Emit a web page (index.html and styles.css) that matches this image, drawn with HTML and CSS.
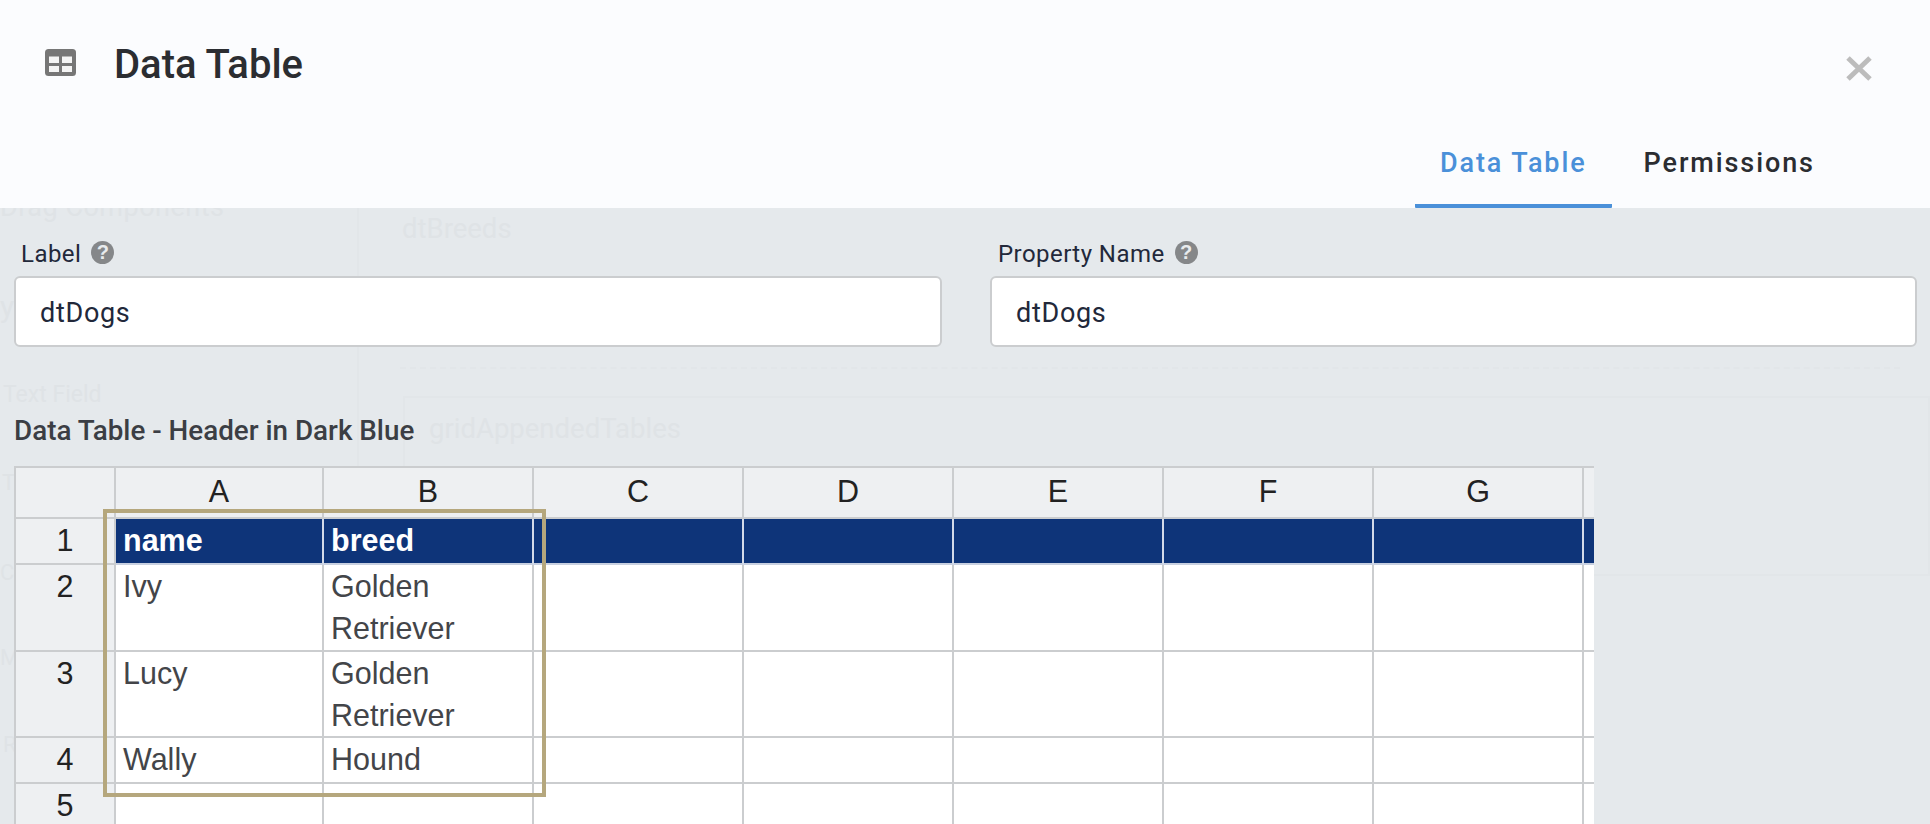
FILE: index.html
```html
<!DOCTYPE html>
<html lang="en">
<head>
<meta charset="utf-8">
<title>Data Table</title>
<link rel="stylesheet" href="styles.css">
</head>
<body>
<div class="backdrop" aria-hidden="true">
  <span class="ghost g-comp">Drag Components</span>
  <span class="ghost g-breeds">dtBreeds</span>
  <span class="ghost g-y">y</span>
  <span class="ghost g-text">Text Field</span>
  <span class="ghost g-grid">gridAppendedTables</span>
  <span class="ghost g-t">T</span>
  <span class="ghost g-c">C</span>
  <span class="ghost g-m">M</span>
  <span class="ghost g-r">R</span>
  <i class="ghost-line gl-v"></i>
  <i class="ghost-line gl-box"></i>
  <i class="ghost-line gl-dash"></i>
</div>
<main class="modal">
  <header class="modal-head">
    <div class="title-row">
      <svg class="title-icon" viewBox="0 0 31 27" aria-hidden="true">
        <rect width="31" height="27" rx="3.5" fill="#767676"/>
        <rect x="4" y="7.5" width="10" height="6.5" fill="#f4f4f4"/>
        <rect x="17" y="7.5" width="10" height="6.5" fill="#f4f4f4"/>
        <rect x="4" y="17" width="10" height="6" fill="#f4f4f4"/>
        <rect x="17" y="17" width="10" height="6" fill="#f4f4f4"/>
      </svg>
      <h1 class="title">Data Table</h1>
      <svg class="close" viewBox="0 0 26 25" aria-hidden="true">
        <path d="M2 2 L24 23 M24 2 L2 23" stroke="#bcbcbc" stroke-width="5" fill="none"/>
      </svg>
    </div>
    <nav class="tabs">
      <a class="tab active">Data Table</a>
      <a class="tab">Permissions</a>
    </nav>
  </header>
  <section class="fields">
    <div class="field">
      <div class="field-label"><span>Label</span><span class="help">?</span></div>
      <div class="input">dtDogs</div>
    </div>
    <div class="field">
      <div class="field-label"><span>Property Name</span><span class="help">?</span></div>
      <div class="input">dtDogs</div>
    </div>
  </section>
  <h2 class="section-title">Data Table - Header in Dark Blue</h2>
  <div class="sheet">
    <table class="grid">
      <colgroup>
        <col class="c-head"><col class="c-a"><col class="c-n"><col class="c-n"><col class="c-n"><col class="c-n"><col class="c-n"><col class="c-n"><col class="c-n">
      </colgroup>
      <thead>
        <tr class="r-top"><th></th><th>A</th><th>B</th><th>C</th><th>D</th><th>E</th><th>F</th><th>G</th><th></th></tr>
      </thead>
      <tbody>
        <tr class="r-one navy"><th>1</th><td>name</td><td>breed</td><td></td><td></td><td></td><td></td><td></td><td></td></tr>
        <tr class="r-two"><th>2</th><td>Ivy</td><td>Golden Retriever</td><td></td><td></td><td></td><td></td><td></td><td></td></tr>
        <tr class="r-two b"><th>3</th><td>Lucy</td><td>Golden Retriever</td><td></td><td></td><td></td><td></td><td></td><td></td></tr>
        <tr class="r-one"><th>4</th><td>Wally</td><td>Hound</td><td></td><td></td><td></td><td></td><td></td><td></td></tr>
        <tr class="r-one"><th>5</th><td></td><td></td><td></td><td></td><td></td><td></td><td></td><td></td></tr>
      </tbody>
    </table>
    <div class="highlight"></div>
  </div>
</main>
</body>
</html>
```
FILE: styles.css
```css
* { box-sizing: border-box; }
html, body { margin: 0; height: 824px; overflow: hidden; }
body {
  position: relative;
  width: 1930px;
  background: #e5e9ec;
  font-family: Roboto, "Liberation Sans", sans-serif;
  color: #22283a;
}

/* page dimmed behind the modal */
.backdrop { position: absolute; inset: 0; overflow: hidden; }
.ghost { position: absolute; color: #dfe3e6; font-size: 27.5px; line-height: 30px; white-space: nowrap; }
.g-comp { left: 0; top: 192px; font-size: 27px; letter-spacing: 0.5px; }
.g-breeds { left: 402px; top: 214px; }
.g-y { left: 0; top: 292px; font-size: 30px; }
.g-text { left: 3px; top: 380px; font-size: 23px; }
.g-grid { left: 429px; top: 414px; }
.g-t { left: 2px; top: 468px; font-size: 22px; }
.g-c { left: 0; top: 558px; font-size: 22px; }
.g-m { left: 0; top: 643px; font-size: 22px; }
.g-r { left: 3px; top: 730px; font-size: 22px; }
.ghost-line { position: absolute; display: block; }
.gl-v { left: 357px; top: 208px; width: 2px; height: 300px; background: #e2e6e9; }
.gl-box { left: 403px; top: 396px; width: 1527px; height: 180px; border: 2px solid #e2e6e9; }
.gl-dash { left: 400px; top: 367px; width: 1500px; border-top: 2px dashed #e2e6e9; }

.modal { position: relative; }

.modal-head { height: 208px; background: #fbfcfe; display: flex; flex-direction: column; }
.title-row { display: flex; align-items: flex-start; padding: 49px 58px 0 45px; height: 147px; }
.title-icon { width: 31px; height: 27px; flex: none; }
.title {
  margin: -8px 0 0 38px;
  font-size: 40px;
  line-height: 48px;
  font-weight: 500;
  color: #2b2d31;
  flex: 1;
}
.close { width: 26px; height: 25px; margin-top: 7px; flex: none; }

.tabs { display: flex; padding-left: 1415px; }
.tab {
  height: 63px;
  padding: 3px 25px 0;
  font-size: 27px;
  line-height: 30px;
  font-weight: 500;
  letter-spacing: 1.9px;
  color: #2b2d31;
}
.tab + .tab { margin-left: 7px; }
.tab.active { color: #4a90d9; border-bottom: 4px solid #4a90d9; border-radius: 0 0 1px 1px; }

.fields {
  display: grid;
  grid-template-columns: 928px 927px;
  column-gap: 48px;
  padding: 31px 13px 0 14px;
}
.field-label {
  display: flex;
  align-items: center;
  gap: 10px;
  height: 30px;
  padding-left: 7px;
  margin-bottom: 7px;
  font-size: 24px;
  letter-spacing: 0.45px;
}
.field + .field .field-label { padding-left: 8px; }
.help {
  width: 23px;
  height: 23px;
  margin-top: -4px;
  border-radius: 50%;
  background: #858789;
  color: #e8ebed;
  font-family: "Liberation Sans", sans-serif;
  font-weight: 700;
  font-size: 20px;
  line-height: 23px;
  text-align: center;
  letter-spacing: 0;
}
.input {
  height: 71px;
  border: 2px solid #cbcdcf;
  border-radius: 6px;
  background: #fff;
  padding-left: 24px;
  font-size: 27px;
  line-height: 70px;
  letter-spacing: 0.7px;
}

.section-title {
  margin: 0;
  padding: 67px 0 0 14px;
  font-size: 27.8px;
  line-height: 34px;
  font-weight: 500;
  color: #3b3e44;
}

.sheet { position: relative; margin: 18px 0 0 14px; height: 360px; overflow: hidden; width: 1580px; }
.grid {
  table-layout: fixed;
  width: 1682px;
  border-collapse: separate;
  border-spacing: 0;
  border-top: 2px solid #cbcdcf;
  border-left: 2px solid #cbcdcf;
  font-family: "Liberation Sans", Arial, sans-serif;
  font-size: 30.5px;
  line-height: 42px;
}
.c-head { width: 100px; }
.c-a { width: 208px; }
.c-n { width: 210px; }
.grid th, .grid td {
  border-right: 2px solid #cbcdcf;
  border-bottom: 2px solid #cbcdcf;
  padding: 0;
  vertical-align: top;
  font-weight: 400;
}
.grid th { background: #eef0f2; color: #222; text-align: center; }
.grid td { background: #fff; color: #434549; padding: 0 7px; }
.r-top { height: 51px; }
.r-top th { padding-top: 2px; }
.r-one { height: 46px; }
.r-two { height: 87px; }
.r-two.b { height: 86px; }
.navy td {
  background: #0e3479;
  color: #fff;
  font-weight: 700;
  border-right-color: #d3dae8;
  border-bottom-color: #c8d0e0;
}
.highlight {
  position: absolute;
  left: 89px;
  top: 43px;
  width: 443px;
  height: 288px;
  border: 4px solid #b5a77d;
}
```
